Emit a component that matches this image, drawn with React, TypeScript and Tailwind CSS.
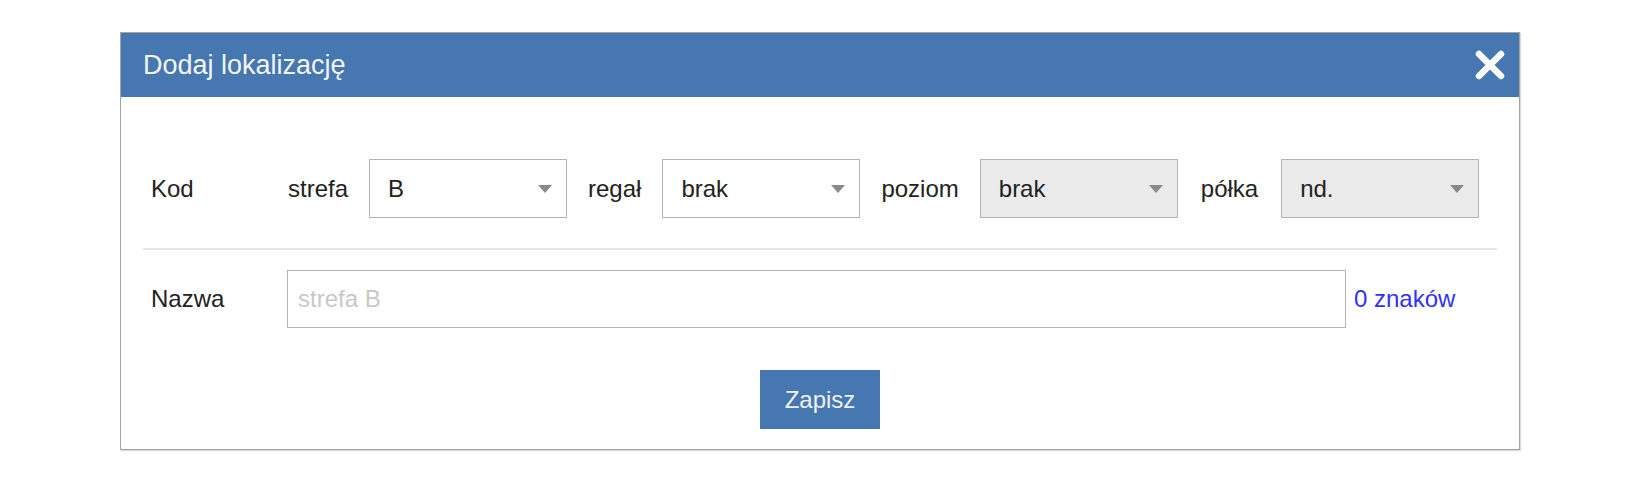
import React from 'react';

type SelectProps = {
  value: string;
  disabled?: boolean;
};

const Select: React.FC<SelectProps> = ({ value, disabled }) => (
  <div
    className={`flex h-[59px] w-[198px] items-center justify-between border-[1.5px] border-[#b3b3b3] pl-[18px] pr-[14px] ${
      disabled ? 'bg-[#ebebeb]' : 'bg-white'
    }`}
  >
    <span className="text-[24px] text-[#222]">{value}</span>
    <svg width="14" height="8" viewBox="0 0 14 8" className="mt-[1px]">
      <path d="M0 0h14L7 8z" fill="#8a8a8a" />
    </svg>
  </div>
);

const Label: React.FC<{ children: React.ReactNode; className?: string }> = ({ children, className }) => (
  <span className={`text-[24px] text-[#222] ${className ?? ''}`}>{children}</span>
);

export default function App() {
  return (
    <div className="min-h-screen bg-white pt-[32px] font-['Liberation_Sans',Arial,sans-serif]">
      <div className="ml-[120px] w-[1400px] border border-[#a3a3a3] bg-white shadow-[1px_1px_1px_rgba(0,0,0,0.15)]">
        <div className="flex h-[64px] items-center justify-between bg-[#4677b1] pl-[22px] pr-[14px]">
          <h1 className="text-[27px] text-[#f2f6fa]">Dodaj lokalizację</h1>
          <svg width="30" height="30" viewBox="0 0 30 30">
            <path d="M4 4 26 26M26 4 4 26" stroke="#fff" strokeWidth="6.5" strokeLinecap="round" />
          </svg>
        </div>

        <div className="px-[22px] pt-[62px] pb-[20px]">
          <div className="flex items-center px-[8px]">
            <div className="w-[137px]">
              <Label>Kod</Label>
            </div>
            <div className="flex items-center gap-[21px]">
              <Label>strefa</Label>
              <Select value="B" />
              <Label>regał</Label>
              <Select value="brak" />
              <Label>poziom</Label>
              <Select value="brak" disabled />
              <Label className="ml-[2px] mr-[2px]">półka</Label>
              <Select value="nd." disabled />
            </div>
          </div>

          <div className="mt-[30px] h-[2px] bg-[#e6e6e6]" />

          <div className="mt-[20px] flex items-center px-[8px]">
            <div className="w-[136px]">
              <Label>Nazwa</Label>
            </div>
            <div className="flex h-[58px] w-[1059px] items-center border-[1.5px] border-[#b3b3b3] px-[10px]">
              <span className="text-[24px] text-[#c8c8c8]">strefa B</span>
            </div>
            <span className="ml-[8px] text-[24px] text-[#3030ff]">0 znaków</span>
          </div>

          <div className="mt-[42px] flex justify-center">
            <button className="h-[59px] w-[120px] bg-[#4677b1] text-[24px] text-[#eef3f8]">Zapisz</button>
          </div>
        </div>
      </div>
    </div>
  );
}
